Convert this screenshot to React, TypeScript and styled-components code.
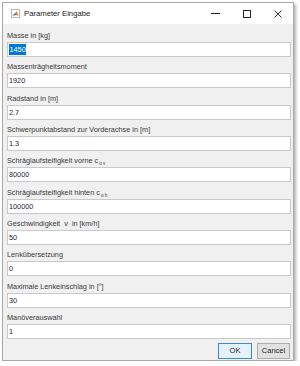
import styled, { createGlobalStyle } from 'styled-components';

const GlobalStyle = createGlobalStyle`
  html, body {
    margin: 0;
    padding: 0;
    background: #ffffff;
  }
  body {
    font-family: "Liberation Sans", Arial, sans-serif;
  }
`;

const Window = styled.div`
  box-sizing: border-box;
  width: 292px;
  height: 359px;
  margin: 2px 0 0 2px;
  border: 1px solid #a8a8a8;
  background: #f0f0f0;
  box-shadow: 2px 2px 3px rgba(0, 0, 0, 0.3);
  display: flex;
  flex-direction: column;
`;

const TitleBar = styled.div`
  height: 21px;
  background: #ffffff;
  display: flex;
  align-items: center;
  padding-left: 8px;
`;

const Title = styled.span`
  font-size: 7.7px;
  color: #1a1a1a;
  margin-left: 4px;
  flex: 1;
`;

const Caption = styled.div`
  width: 31px;
  height: 21px;
  display: flex;
  align-items: center;
  justify-content: center;
`;

const Form = styled.div`
  display: flex;
  flex-direction: column;
  gap: 4.33px;
  padding: 6px 2px 0 4px;
`;

const Field = styled.div`
  display: flex;
  flex-direction: column;
`;

const Label = styled.div`
  font-size: 7.3px;
  line-height: 12px;
  height: 12px;
  color: #3a3a3a;
  white-space: nowrap;
`;

const Sub = styled.sub`
  font-size: 4.5px;
  vertical-align: -2px;
  margin-left: 1px;
`;

const Input = styled.div`
  box-sizing: border-box;
  height: 15px;
  background: #ffffff;
  border: 1px solid #c9c9c9;
  font-size: 7.3px;
  color: #23233a;
  display: flex;
  align-items: center;
  padding-left: 1px;
`;

const Selected = styled.span`
  background: #0078d7;
  color: #ffffff;
  line-height: 11px;
  padding: 0 0.5px;
`;

const Buttons = styled.div`
  display: flex;
  justify-content: flex-end;
  gap: 5px;
  padding: 4px 3px 0 0;
`;

const Button = styled.div<{ $primary?: boolean; $w: number }>`
  box-sizing: border-box;
  width: ${(p) => p.$w}px;
  height: 16px;
  border: 1px solid ${(p) => (p.$primary ? '#3c8ad3' : '#adadad')};
  background: ${(p) => (p.$primary ? '#e5f1fb' : '#e1e1e1')};
  font-size: 7.5px;
  color: #222;
  display: flex;
  align-items: center;
  justify-content: center;
`;

const fields: { label: React.ReactNode; value: string; selected?: boolean }[] = [
  { label: 'Masse in [kg]', value: '1450', selected: true },
  { label: 'Massenträgheitsmoment', value: '1920' },
  { label: 'Radstand in [m]', value: '2.7' },
  { label: 'Schwerpunktabstand zur Vorderachse in [m]', value: '1.3' },
  {
    label: (
      <>
        Schräglaufsteifigkeit vorne c<Sub>α v</Sub>
      </>
    ),
    value: '80000',
  },
  {
    label: (
      <>
        Schräglaufsteifigkeit hinten c<Sub>α h</Sub>
      </>
    ),
    value: '100000',
  },
  { label: 'Geschwindigkeit \u00a0v\u00a0 in [km/h]', value: '50' },
  { label: 'Lenkübersetzung', value: '0' },
  { label: 'Maximale Lenkeinschlag in [°]', value: '30' },
  { label: 'Manöverauswahl', value: '1' },
];

function AppIcon() {
  return (
    <svg width="9" height="9" viewBox="0 0 9 9">
      <rect x="0.5" y="0.5" width="8" height="8" fill="#fff" stroke="#b8b8b8" />
      <path d="M1.5 6.5 L4 4.5 L5.5 2 L7.5 7 L5.5 6 Z" fill="#e8731f" />
      <path d="M1.5 6.5 L4 4.5 L5 6 Z" fill="#2f6fc4" />
    </svg>
  );
}

export default function App() {
  return (
    <>
      <GlobalStyle />
      <Window>
        <TitleBar>
          <AppIcon />
          <Title>Parameter Eingabe</Title>
          <Caption>
            <svg width="9" height="9" viewBox="0 0 9 9">
              <path d="M0 4.5 H9" stroke="#222" strokeWidth="1" />
            </svg>
          </Caption>
          <Caption>
            <svg width="8" height="8" viewBox="0 0 8 8">
              <rect x="0.5" y="0.5" width="7" height="7" fill="none" stroke="#222" />
            </svg>
          </Caption>
          <Caption>
            <svg width="8" height="8" viewBox="0 0 8 8">
              <path d="M0.5 0.5 L7.5 7.5 M7.5 0.5 L0.5 7.5" stroke="#222" strokeWidth="0.9" />
            </svg>
          </Caption>
        </TitleBar>
        <Form>
          {fields.map((f, i) => (
            <Field key={i}>
              <Label>{f.label}</Label>
              <Input>{f.selected ? <Selected>{f.value}</Selected> : f.value}</Input>
            </Field>
          ))}
        </Form>
        <Buttons>
          <Button $primary $w={34}>OK</Button>
          <Button $w={33}>Cancel</Button>
        </Buttons>
      </Window>
    </>
  );
}
